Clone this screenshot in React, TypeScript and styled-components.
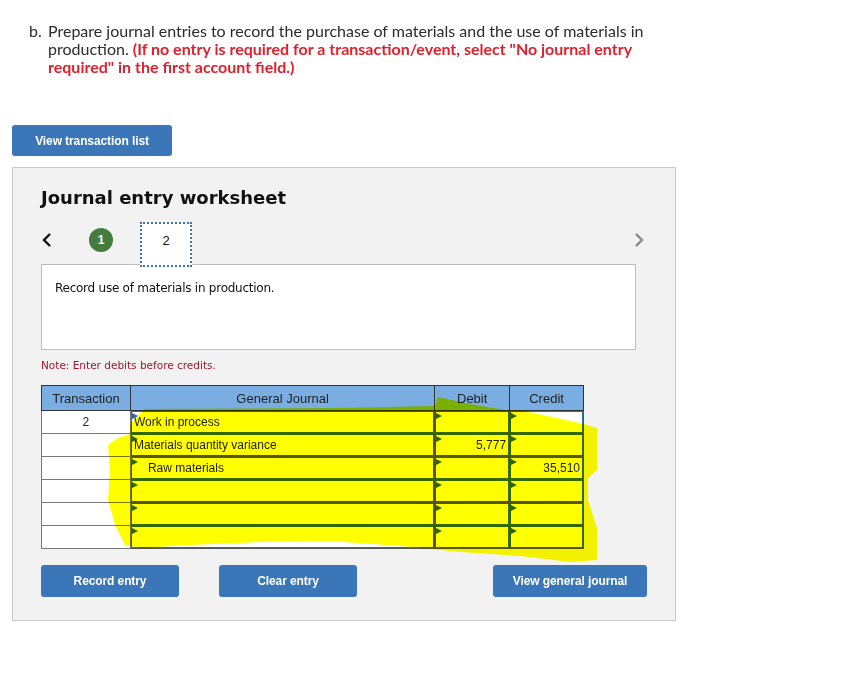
import styled, { createGlobalStyle } from "styled-components";

const GlobalStyle = createGlobalStyle`
  body {
    margin: 0;
    background: #ffffff;
  }
`;

const Page = styled.div`
  padding: 22px 0 40px 12px;
  width: 832px;
  box-sizing: border-box;
`;

const Prompt = styled.div`
  display: flex;
  margin-left: 17px;
  width: 640px;
  font-family: Lato, "Open Sans", sans-serif;
  font-size: 16px;
  line-height: 18px;
  color: #2b2b2b;
`;

const PromptLabel = styled.span`
  flex: 0 0 19px;
`;

const Warning = styled.strong`
  color: #e0202c;
  font-weight: 700;
`;

const BlueButton = styled.button<{ $w: number }>`
  width: ${(p) => p.$w}px;
  height: 32px;
  border: none;
  border-radius: 3px;
  background: #3b76b9;
  color: #ffffff;
  font-family: "Liberation Sans", Arial, sans-serif;
  font-weight: 700;
  font-size: 12px;
  letter-spacing: -0.1px;
  cursor: pointer;
  padding: 0;
`;

const TopButton = styled(BlueButton)`
  margin-top: 49px;
  height: 31px;
`;

const Panel = styled.section`
  margin-top: 11px;
  width: 664px;
  height: 454px;
  box-sizing: border-box;
  background: #f2f2f2;
  border: 1px solid #c9c9c9;
  padding: 19px 28px 0 28px;
  display: flex;
  flex-direction: column;
`;

const Title = styled.h2`
  margin: 0;
  font-family: "DejaVu Sans", Verdana, sans-serif;
  font-weight: 700;
  font-size: 18px;
  line-height: 22px;
  color: #111;
`;

const NavRow = styled.div`
  margin-top: 13px;
  display: flex;
  align-items: flex-start;
  height: 45px;
  position: relative;
  z-index: 1;
`;

const Chevron = styled.svg<{ $faint?: boolean }>`
  margin-top: 10px;
  width: 12px;
  height: 16px;
  flex: none;
  stroke: ${(p) => (p.$faint ? "#8a8a8a" : "#111")};
  fill: none;
  stroke-width: 2.4;
`;

const StepDot = styled.span`
  margin: 6px 0 0 36px;
  width: 24px;
  height: 24px;
  border-radius: 50%;
  background: #437c3c;
  color: #fff;
  font-family: "Liberation Sans", Arial, sans-serif;
  font-size: 12px;
  font-weight: 700;
  display: flex;
  align-items: center;
  justify-content: center;
`;

const StepTab = styled.div`
  margin-left: 27px;
  width: 52px;
  height: 45px;
  box-sizing: border-box;
  background: #fff;
  border: 2px dotted #3a72b8;
  padding-bottom: 8px;
  display: flex;
  align-items: center;
  justify-content: center;
  font-family: "Liberation Sans", Arial, sans-serif;
  font-size: 13px;
  color: #111;
`;

const NavSpacer = styled.div`
  flex: 1;
`;

const Description = styled.div`
  margin-top: -3px;
  width: 595px;
  height: 86px;
  box-sizing: border-box;
  background: #fff;
  border: 1px solid #bdbdbd;
  padding: 15px 13px;
  font-family: "DejaVu Sans", Verdana, sans-serif;
  font-size: 12px;
  line-height: 16px;
  letter-spacing: -0.25px;
  color: #111;
`;

const Note = styled.div`
  margin-top: 8px;
  font-family: "DejaVu Sans", Verdana, sans-serif;
  font-size: 10.5px;
  line-height: 14px;
  color: #a3182c;
`;

const TableWrap = styled.div`
  position: relative;
  margin-top: 13px;
  width: 543px;
`;

const Journal = styled.table`
  border-collapse: collapse;
  table-layout: fixed;
  font-family: "Liberation Sans", Arial, sans-serif;
  color: #222;
`;

const HeadCell = styled.th<{ $w: number }>`
  width: ${(p) => p.$w}px;
  height: 24px;
  padding: 0;
  background: #7aaee3;
  border: 1px solid #333;
  font-size: 13px;
  font-weight: 400;
  color: #222;
`;

const TxCell = styled.td`
  height: 22px;
  padding: 0;
  border: 1px solid #777;
  background: #fff;
  text-align: center;
  font-size: 12px;
`;

const EntryCell = styled.td`
  height: 22px;
  padding: 0;
  border: 1px solid #555;
  background: #fff;
`;

const EntryBox = styled.div<{ $align?: "left" | "right"; $indent?: boolean }>`
  position: relative;
  height: 22px;
  box-sizing: border-box;
  border: 1.5px solid #3569a8;
  padding: ${(p) => (p.$indent ? "0 2px 0 16px" : "0 2px 0 2px")};
  text-align: ${(p) => p.$align ?? "left"};
  font-size: 12px;
  line-height: 20px;
  white-space: nowrap;
  overflow: hidden;
  &::before {
    content: "";
    position: absolute;
    left: 0;
    top: 1px;
    border-left: 6px solid #2f66ad;
    border-top: 3px solid transparent;
    border-bottom: 3px solid transparent;
  }
`;

const Highlight = styled.svg`
  position: absolute;
  left: 0;
  top: 0;
  width: 560px;
  height: 180px;
  overflow: visible;
  pointer-events: none;
  mix-blend-mode: multiply;
`;

const ButtonRow = styled.div`
  margin-top: 16px;
  display: flex;
  gap: 40px;
`;

const PushRight = styled(BlueButton)`
  margin-left: auto;
`;

type Row = { tx?: string; account?: string; debit?: string; credit?: string; indent?: boolean };

const rows: Row[] = [
  { tx: "2", account: "Work in process" },
  { account: "Materials quantity variance", debit: "5,777" },
  { account: "Raw materials", credit: "35,510", indent: true },
  {},
  {},
  {},
];

// freehand marker stroke drawn over the answer grid (table-local coords)
const blob =
  "M104,24 L296,23 L394,21 L397,12 L429,19 L464,25 L479,25 L543,39 L556,43 L556,85 L547,93 L547,115 L556,143 L556,175 L529,177 L479,171 L419,167 L359,161 L289,156 L219,157 L149,160 L99,163 L84,160 L74,140 L67,115 L69,85 L67,60 L77,53 L89,49 L89,40 L96,31 Z";

export default function App() {
  return (
    <Page>
      <GlobalStyle />
      <Prompt>
        <PromptLabel>b.</PromptLabel>
        <span>
          Prepare journal entries to record the purchase of materials and the use of materials in
          production.{" "}
          <Warning>
            (If no entry is required for a transaction/event, select "No journal entry required" in
            the first account field.)
          </Warning>
        </span>
      </Prompt>

      <TopButton $w={160}>View transaction list</TopButton>

      <Panel>
        <Title>Journal entry worksheet</Title>

        <NavRow>
          <Chevron viewBox="0 0 12 16">
            <polyline points="9,2 3,8 9,14" />
          </Chevron>
          <StepDot>1</StepDot>
          <StepTab>2</StepTab>
          <NavSpacer />
          <Chevron viewBox="0 0 12 16" $faint style={{ marginRight: 2 }}>
            <polyline points="3,2 9,8 3,14" />
          </Chevron>
        </NavRow>

        <Description>Record use of materials in production.</Description>

        <Note>Note: Enter debits before credits.</Note>

        <TableWrap>
          <Journal>
            <thead>
              <tr>
                <HeadCell $w={88}>Transaction</HeadCell>
                <HeadCell $w={304}>General Journal</HeadCell>
                <HeadCell $w={74}>Debit</HeadCell>
                <HeadCell $w={73}>Credit</HeadCell>
              </tr>
            </thead>
            <tbody>
              {rows.map((r, i) => (
                <tr key={i}>
                  <TxCell>{r.tx}</TxCell>
                  <EntryCell>
                    <EntryBox $indent={r.indent}>{r.account}</EntryBox>
                  </EntryCell>
                  <EntryCell>
                    <EntryBox $align="right">{r.debit}</EntryBox>
                  </EntryCell>
                  <EntryCell>
                    <EntryBox $align="right">{r.credit}</EntryBox>
                  </EntryCell>
                </tr>
              ))}
            </tbody>
          </Journal>
          <Highlight viewBox="0 0 560 180">
            <path d={blob} fill="#ffff00" />
          </Highlight>
        </TableWrap>

        <ButtonRow>
          <BlueButton $w={138}>Record entry</BlueButton>
          <BlueButton $w={138}>Clear entry</BlueButton>
          <PushRight $w={154}>View general journal</PushRight>
        </ButtonRow>
      </Panel>
    </Page>
  );
}
